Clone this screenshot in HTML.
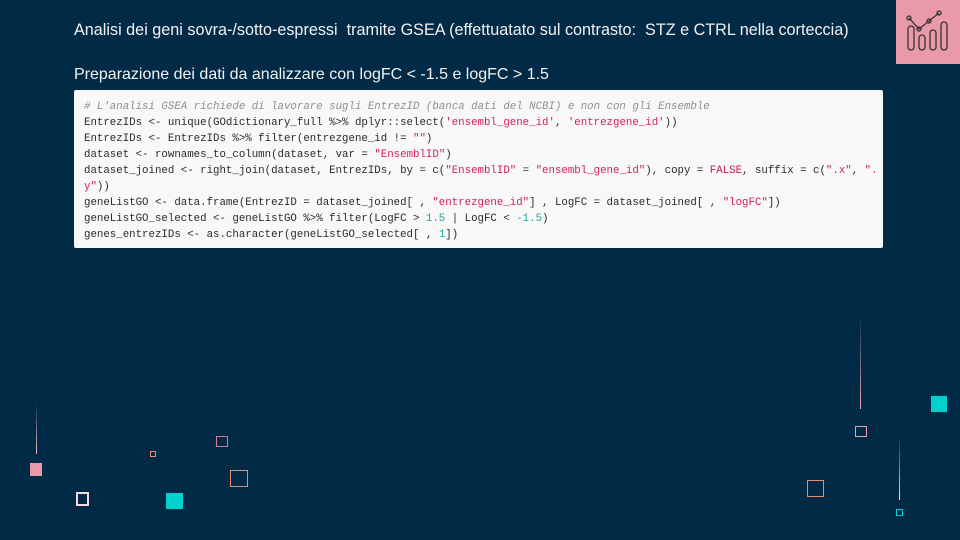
<!DOCTYPE html>
<html><head><meta charset="utf-8"><style>
*{margin:0;padding:0}
body{width:960px;height:540px;background:#002a46;position:relative;overflow:hidden;font-family:"Liberation Sans",sans-serif;color:#f2f2f2}
.t{position:absolute;left:74px;font-size:16.2px;white-space:nowrap}
.code{position:absolute;left:74px;top:90px;width:809px;height:158px;background:#f8f8f8;border-radius:2px}
pre{position:absolute;left:10px;top:9px;font-family:"Liberation Mono",monospace;font-size:10.75px;line-height:16px;color:#2a2a2a}
.c{color:#8e908c;font-style:italic}.s{color:#d81b60}.n{color:#1aa5a5}.k{color:#c2185b}
.a{position:absolute}
</style></head><body>
<div class="t" style="top:21px">Analisi dei geni sovra-/sotto-espressi&nbsp; tramite GSEA (effettuatato sul contrasto:&nbsp; STZ e CTRL nella corteccia)</div>
<div class="t" style="top:66px;font-size:16px">Preparazione dei dati da analizzare con logFC &lt; -1.5 e logFC &gt; 1.5</div>
<div class="a" style="left:896px;top:0;width:64px;height:64px;background:#e899aa">
<svg width="64" height="64" viewBox="0 0 64 64" fill="none" stroke="#333" stroke-width="1.3">
<rect x="12" y="26" width="6" height="24" rx="3"/><rect x="23" y="35" width="6" height="15" rx="3"/><rect x="34" y="30" width="6" height="20" rx="3"/><rect x="45" y="22" width="6" height="28" rx="3"/>
<polyline points="13,18 23,29 33,21 43,13"/><circle cx="13" cy="18" r="2"/><circle cx="23" cy="29" r="2"/><circle cx="33" cy="21" r="2"/><circle cx="43" cy="13" r="2"/>
</svg></div>
<div class="code"><pre><span class="c"># L'analisi GSEA richiede di lavorare sugli EntrezID (banca dati del NCBI) e non con gli Ensemble</span>
EntrezIDs &lt;- unique(GOdictionary_full %&gt;% dplyr::select(<span class="s">'ensembl_gene_id'</span>, <span class="s">'entrezgene_id'</span>))
EntrezIDs &lt;- EntrezIDs %&gt;% filter(entrezgene_id != <span class="s">""</span>)
dataset &lt;- rownames_to_column(dataset, var = <span class="s">"EnsemblID"</span>)
dataset_joined &lt;- right_join(dataset, EntrezIDs, by = c(<span class="s">"EnsemblID"</span> = <span class="s">"ensembl_gene_id"</span>), copy = <span class="k">FALSE</span>, suffix = c(<span class="s">".x"</span>, <span class="s">".</span>
<span class="s">y"</span>))
geneListGO &lt;- data.frame(EntrezID = dataset_joined[ , <span class="s">"entrezgene_id"</span>] , LogFC = dataset_joined[ , <span class="s">"logFC"</span>])
geneListGO_selected &lt;- geneListGO %&gt;% filter(LogFC &gt; <span class="n">1.5</span> | LogFC &lt; <span class="n">-1.5</span>)
genes_entrezIDs &lt;- as.character(geneListGO_selected[ , <span class="n">1</span>])</pre></div>
<div class="a" style="left:36px;top:403px;width:1px;height:51px;background:linear-gradient(#002a46,#f0c0c8)"></div>
<div class="a" style="left:30px;top:463px;width:12px;height:13px;background:#e899aa"></div>
<div class="a" style="left:76px;top:492px;width:13px;height:14px;border:2px solid #f5dbe0;box-sizing:border-box"></div>
<div class="a" style="left:150px;top:451px;width:6px;height:6px;border:1px solid #e8906a;box-sizing:border-box"></div>
<div class="a" style="left:216px;top:436px;width:12px;height:11px;border:1px solid #d07c94;box-sizing:border-box"></div>
<div class="a" style="left:230px;top:470px;width:18px;height:17px;border:1px solid #e8906a;box-sizing:border-box"></div>
<div class="a" style="left:166px;top:493px;width:17px;height:16px;background:#00d1cc"></div>
<div class="a" style="left:860px;top:315px;width:1px;height:94px;background:linear-gradient(#002a46,#f0a8b8)"></div>
<div class="a" style="left:855px;top:426px;width:12px;height:11px;border:1px solid #f0a0b0;box-sizing:border-box"></div>
<div class="a" style="left:931px;top:396px;width:16px;height:16px;background:#00d1cc"></div>
<div class="a" style="left:899px;top:435px;width:1px;height:65px;background:linear-gradient(#002a46,#e8e8f0)"></div>
<div class="a" style="left:896px;top:509px;width:7px;height:7px;border:1px solid #00d1cc;box-sizing:border-box"></div>
<div class="a" style="left:807px;top:480px;width:17px;height:17px;border:1px solid #e8906a;box-sizing:border-box"></div>
</body></html>
